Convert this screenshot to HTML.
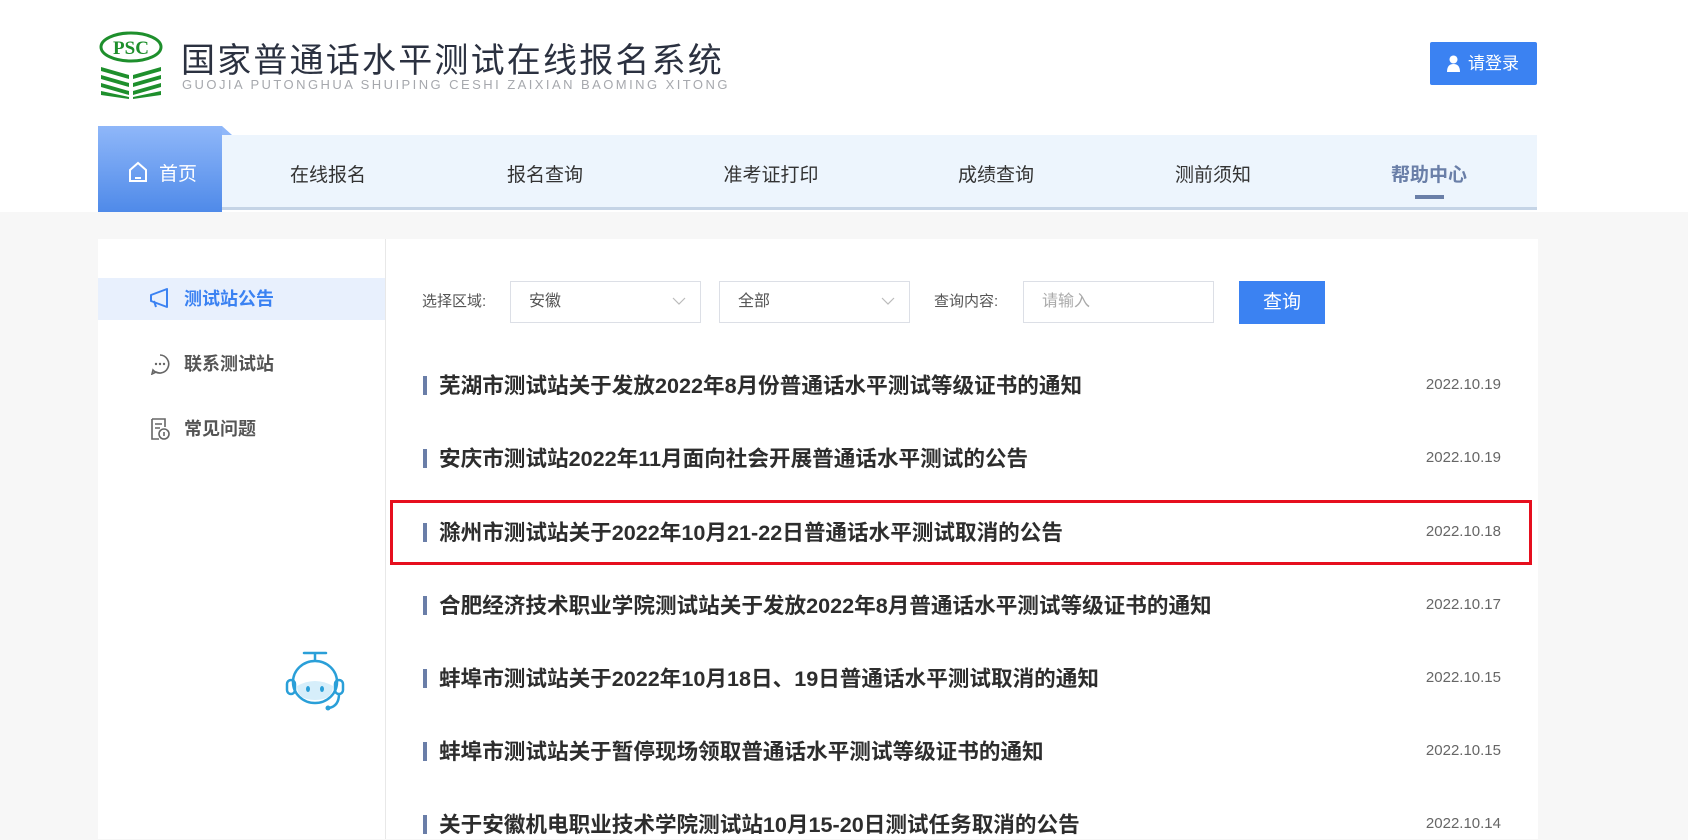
<!DOCTYPE html>
<html><head><meta charset="utf-8"><style>
*{margin:0;padding:0;box-sizing:border-box}
body{width:1688px;height:818px;overflow:hidden;background:#f7f7f7;font-family:"Liberation Sans","Noto Sans CJK SC",sans-serif;position:relative}
.abs{position:absolute}
.top{position:absolute;left:0;top:0;width:1688px;height:212px;background:#fff}
.title{left:181px;top:37px;font-size:34px;color:#2b3140;letter-spacing:2.2px;white-space:nowrap;line-height:48px}
.sub{left:182px;top:77px;font-size:13px;color:#a6a8ad;letter-spacing:2.45px;white-space:nowrap}
.login{left:1430px;top:42px;width:107px;height:43px;background:#3b82f2;border-radius:2px;color:#fff;font-size:17px;line-height:43px;padding-left:38px}
.nav{left:98px;top:135px;width:1439px;height:75px;background:#edf5fd;border-bottom:3px solid #c5d4e6}
.tab{left:98px;top:126px;width:124px;height:86px;background:linear-gradient(#8fb7f9,#4f8ae9);color:#fff;font-size:19px}
.ni{position:absolute;top:160px;font-size:19px;color:#333;transform:translateX(-50%);white-space:nowrap}
.card{left:98px;top:239px;width:1440px;height:600px;background:#fff}
.side{left:385px;top:239px;width:1px;height:600px;background:#e8e8e8}
.act{left:98px;top:278px;width:287px;height:42px;background:#e8f0fd}
.si{position:absolute;left:184px;font-size:18px;font-weight:bold;color:#555;line-height:24px}
.lbl{position:absolute;top:290px;font-size:15px;color:#555}
.sel{position:absolute;top:281px;height:42px;border:1px solid #dcdfe6;font-size:16px;color:#555;line-height:40px;padding-left:18px;background:#fff}
.item{position:absolute;left:423px;height:26px;width:1080px}
.item .b{position:absolute;left:0;top:4px;width:4px;height:19px;background:#6a7ea8}
.item .t{position:absolute;left:16px;top:-1px;font-size:21.6px;font-weight:bold;color:#2d2d2d;white-space:nowrap;line-height:30px}
.item .d{position:absolute;right:2px;top:4px;font-size:15px;color:#666}
</style></head><body>
<div class="top"></div>
<svg class="abs" style="left:99px;top:31px" width="66" height="68" viewBox="0 0 66 68">
<ellipse cx="32" cy="16" rx="30" ry="14" fill="none" stroke="#1e8f2c" stroke-width="3"/>
<text x="32" y="23" text-anchor="middle" font-family="Liberation Serif,serif" font-weight="bold" font-size="19" fill="#1e8f2c">PSC</text>
<g fill="#1e8f2c"><path d="M2 36 L30 44 L30 48 L2 40Z"/><path d="M2 44 L30 52 L30 56 L2 48Z"/><path d="M2 52 L30 60 L30 64 L2 56Z"/><path d="M2 60 L30 66 L30 68 L2 64Z"/>
<path d="M62 36 L34 44 L34 48 L62 40Z"/><path d="M62 44 L34 52 L34 56 L62 48Z"/><path d="M62 52 L34 60 L34 64 L62 56Z"/><path d="M62 60 L34 66 L34 68 L62 64Z"/></g></svg>
<div class="abs title">国家普通话水平测试在线报名系统</div>
<div class="abs sub">GUOJIA PUTONGHUA SHUIPING CESHI ZAIXIAN BAOMING XITONG</div>
<div class="abs login"><svg class="abs" style="left:17px;top:13px" width="13" height="17" viewBox="0 0 13 17"><circle cx="6.5" cy="4.5" r="4" fill="#fff"/><path d="M0 17 Q0 9 6.5 9 Q13 9 13 17Z" fill="#fff"/></svg>请登录</div>
<div class="abs nav"></div>
<svg class="abs" style="left:222px;top:126px" width="10" height="10"><path d="M0 0 L10 9 L0 9Z" fill="#8fb7f9"/></svg>
<div class="abs tab"><svg class="abs" style="left:30px;top:35px" width="20" height="22" viewBox="0 0 20 22"><path d="M2 9 L10 2 L18 9 V20 H2Z" fill="none" stroke="#fff" stroke-width="2"/><path d="M7 17 H13" stroke="#fff" stroke-width="2"/></svg><span class="abs" style="left:61px;top:33px">首页</span></div>
<div class="ni" style="left:328px">在线报名</div>
<div class="ni" style="left:545px">报名查询</div>
<div class="ni" style="left:771px">准考证打印</div>
<div class="ni" style="left:996px">成绩查询</div>
<div class="ni" style="left:1213px">测前须知</div>
<div class="ni" style="left:1429px;color:#6a7fa8;font-weight:bold">帮助中心</div>
<div class="abs" style="left:1415px;top:195px;width:29px;height:4px;background:#6a7fa8"></div>
<div class="abs card"></div>
<div class="abs side"></div>
<div class="abs act"></div>
<svg class="abs" style="left:149px;top:287px" width="22" height="22" viewBox="0 0 22 22"><path d="M2 8 L18 2 V20 L2 14Z M5 14 L7 20" fill="none" stroke="#3b82f2" stroke-width="2" stroke-linejoin="round"/></svg>
<div class="si" style="top:287px;color:#3b82f2">测试站公告</div>
<svg class="abs" style="left:149px;top:353px" width="22" height="22" viewBox="0 0 22 22"><path d="M11 2 A9 9 0 1 1 4 17 L3 21 L7 19 A9 9 0 0 0 11 20" fill="none" stroke="#666" stroke-width="1.6"/><circle cx="7" cy="11" r="1.2" fill="#666"/><circle cx="11" cy="11" r="1.2" fill="#666"/><circle cx="15" cy="11" r="1.2" fill="#666"/></svg>
<div class="si" style="top:352px">联系测试站</div>
<svg class="abs" style="left:150px;top:417px" width="20" height="24" viewBox="0 0 20 24"><path d="M2 2 H15 V10 M9 22 H2 V2" fill="none" stroke="#666" stroke-width="1.6"/><path d="M5 7 H12 M5 11 H10" stroke="#666" stroke-width="1.6"/><circle cx="14" cy="17" r="5" fill="none" stroke="#666" stroke-width="1.6"/><path d="M14 15 V19" stroke="#666" stroke-width="1.6"/></svg>
<div class="si" style="top:417px">常见问题</div>
<svg class="abs" style="left:284px;top:650px" width="62" height="66" viewBox="0 0 62 66"><path d="M20 3 H42 M31 3 V10" stroke="#2a9fd8" stroke-width="2.5" stroke-linecap="round"/><ellipse cx="31" cy="32" rx="22" ry="21" fill="#fff" stroke="#2a9fd8" stroke-width="2.5"/><path d="M13 36 Q31 26 49 36 Q49 50 31 50 Q13 50 13 36Z" fill="#d6eefa"/><ellipse cx="24" cy="39" rx="2" ry="3" fill="#2a9fd8"/><ellipse cx="38" cy="39" rx="2" ry="3" fill="#2a9fd8"/><rect x="3" y="30" width="8" height="14" rx="4" fill="none" stroke="#2a9fd8" stroke-width="2.5"/><rect x="51" y="30" width="8" height="14" rx="4" fill="none" stroke="#2a9fd8" stroke-width="2.5"/><path d="M55 44 Q55 56 45 58" fill="none" stroke="#2a9fd8" stroke-width="2.5"/><circle cx="44" cy="58" r="2.5" fill="#2a9fd8"/></svg>
<div class="lbl" style="left:422px">选择区域:</div>
<div class="sel" style="left:510px;width:191px">安徽<svg class="abs" style="right:14px;top:14px" width="14" height="10"><path d="M1 2 L7 8 L13 2" fill="none" stroke="#bbb" stroke-width="1.2"/></svg></div>
<div class="sel" style="left:719px;width:191px">全部<svg class="abs" style="right:14px;top:14px" width="14" height="10"><path d="M1 2 L7 8 L13 2" fill="none" stroke="#bbb" stroke-width="1.2"/></svg></div>
<div class="lbl" style="left:934px">查询内容:</div>
<div class="sel" style="left:1023px;width:191px;color:#aaa">请输入</div>
<div class="abs" style="left:1239px;top:281px;width:86px;height:43px;background:#3b82f2;color:#fff;font-size:19px;line-height:43px;text-align:center">查询</div>
<div class="item" style="top:372px"><div class="b"></div><div class="t">芜湖市测试站关于发放2022年8月份普通话水平测试等级证书的通知</div><div class="d">2022.10.19</div></div>
<div class="item" style="top:445px"><div class="b"></div><div class="t">安庆市测试站2022年11月面向社会开展普通话水平测试的公告</div><div class="d">2022.10.19</div></div>
<div class="item" style="top:519px"><div class="b"></div><div class="t">滁州市测试站关于2022年10月21-22日普通话水平测试取消的公告</div><div class="d">2022.10.18</div></div>
<div class="item" style="top:592px"><div class="b"></div><div class="t">合肥经济技术职业学院测试站关于发放2022年8月普通话水平测试等级证书的通知</div><div class="d">2022.10.17</div></div>
<div class="item" style="top:665px"><div class="b"></div><div class="t">蚌埠市测试站关于2022年10月18日、19日普通话水平测试取消的通知</div><div class="d">2022.10.15</div></div>
<div class="item" style="top:738px"><div class="b"></div><div class="t">蚌埠市测试站关于暂停现场领取普通话水平测试等级证书的通知</div><div class="d">2022.10.15</div></div>
<div class="item" style="top:811px"><div class="b"></div><div class="t">关于安徽机电职业技术学院测试站10月15-20日测试任务取消的公告</div><div class="d">2022.10.14</div></div>
<div class="abs" style="left:390px;top:500px;width:1142px;height:65px;border:3px solid #e60f1e"></div>
</body></html>
